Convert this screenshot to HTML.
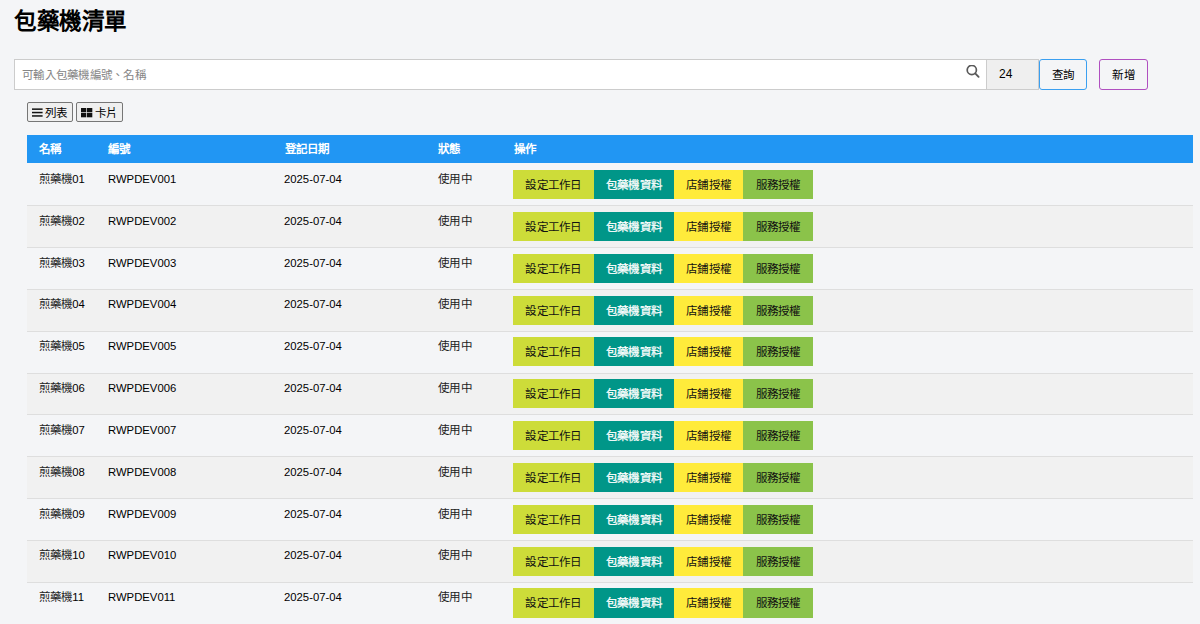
<!DOCTYPE html>
<html lang="zh-TW"><head><meta charset="utf-8"><style>
*{box-sizing:border-box;margin:0;padding:0}
html,body{width:1200px;height:624px;overflow:hidden;background:#f4f5f7;font-family:"Liberation Sans",sans-serif;color:#000}
h1{position:absolute;left:14px;top:7px;letter-spacing:-0.4px;font-size:22.5px;font-weight:bold;line-height:30px;white-space:nowrap}
.search{position:absolute;left:14px;top:59px;width:973px;height:31px;background:#fff;border:1px solid #ccc}
.search .ph{position:absolute;left:7px;top:7px;font-size:11.5px;letter-spacing:0.25px;line-height:16px;color:#858585;white-space:nowrap}
.search svg{position:absolute;left:951px;top:5px}
.k{font-size:11.5px;letter-spacing:0.25px;color:#222}
.num{position:absolute;left:987px;top:59px;width:52px;height:31px;background:#efefef;border:1px solid #ccc;border-left:none;font-size:12px;line-height:16px;padding:6px 0 0 12px}
.btn{position:absolute;top:59px;height:30.5px;border-radius:3px;background:#f4f5f7;font-size:11.5px;text-align:center;line-height:30px;letter-spacing:0.25px}
.q{left:1039px;width:48px;border:1.2px solid #3a9ff0}
.add{left:1099px;width:49px;border:1.2px solid #b04fc0}
.vb{position:absolute;top:102.3px;height:19.3px;border:1px solid #767676;border-radius:2px;background:#efefef;font-size:11.5px;line-height:17px;white-space:nowrap}
.vb svg{position:absolute;left:4px;top:4.5px}
.vb span{position:absolute;top:2px;letter-spacing:0.25px}
.thead{position:absolute;left:27px;top:134.8px;width:1166px;height:28.6px;background:#2196F3;color:#fff;font-weight:bold;font-size:11.5px}
.thead span,.r span.c1,.r span.c2,.r span.c3,.r span.c4{position:absolute;white-space:nowrap;line-height:16px}
.thead span{top:6px;letter-spacing:0.25px}
.rows{position:absolute;left:27px;top:163.4px;width:1166px}
.r{position:relative;height:41.85px;font-size:11.3px}
.r+.r::before{content:"";position:absolute;left:0;top:0;width:100%;height:1px;background:#dedede}
.r.alt{background:#f1f1f1}
.r span.c1,.r span.c2,.r span.c3,.r span.c4{top:7.5px}
.c1{left:11.5px} .c2{left:81px} .c3{left:257px} .c4{left:411px}
.ops{position:absolute;left:486.3px;top:6.6px;display:flex;height:29.1px}
.ops span{display:block;height:29.1px;line-height:30.6px;text-align:center;font-size:11.5px;letter-spacing:0.25px;text-indent:0.25px;color:#111;white-space:nowrap}
.ops .b1{width:80.4px} .ops .b2{width:80.3px} .ops .b3{width:69px} .ops .b4{width:70px}
.b1{background:#CDDC39} .ops .b2{background:#009688;color:#fff;-webkit-text-stroke:0.25px #fff} .b3{background:#FFEB3B} .b4{background:#8BC34A}
</style></head><body>
<h1>包藥機清單</h1>
<div class="search"><span class="ph">可輸入包藥機編號、名稱</span><svg width="16" height="16" viewBox="0 0 16 16"><circle cx="5.8" cy="5.0" r="4.6" fill="none" stroke="#5a5a5a" stroke-width="1.7"/><line x1="9.2" y1="8.4" x2="12.6" y2="11.8" stroke="#5a5a5a" stroke-width="1.9" stroke-linecap="round"/></svg></div>
<div class="num">24</div>
<div class="btn q">查詢</div>
<div class="btn add">新增</div>
<div class="vb" style="left:27.2px;width:45.5px"><svg width="12" height="10" viewBox="0 0 12 10"><rect x="0" y="0.4" width="10.6" height="1.5" fill="#111"/><rect x="0" y="3.8" width="10.6" height="1.5" fill="#111"/><rect x="0" y="7.2" width="10.6" height="1.5" fill="#111"/></svg><span style="left:17px">列表</span></div>
<div class="vb" style="left:76.1px;width:47px"><svg width="12" height="10" viewBox="0 0 12 10"><rect x="0" y="0" width="5.3" height="4.3" fill="#111"/><rect x="6" y="0" width="5.3" height="4.3" fill="#111"/><rect x="0" y="5" width="5.3" height="4.3" fill="#111"/><rect x="6" y="5" width="5.3" height="4.3" fill="#111"/></svg><span style="left:18px">卡片</span></div>
<div class="thead"><span style="left:11.5px">名稱</span><span style="left:81px">編號</span><span style="left:257.5px">登記日期</span><span style="left:411px">狀態</span><span style="left:486.5px">操作</span></div>
<div class="rows">
<div class="r"><span class="c1"><span class="k">煎藥機</span>01</span><span class="c2">RWPDEV001</span><span class="c3">2025-07-04</span><span class="c4 k">使用中</span><div class="ops"><span class="b1">設定工作日</span><span class="b2">包藥機資料</span><span class="b3">店鋪授權</span><span class="b4">服務授權</span></div></div>
<div class="r alt"><span class="c1"><span class="k">煎藥機</span>02</span><span class="c2">RWPDEV002</span><span class="c3">2025-07-04</span><span class="c4 k">使用中</span><div class="ops"><span class="b1">設定工作日</span><span class="b2">包藥機資料</span><span class="b3">店鋪授權</span><span class="b4">服務授權</span></div></div>
<div class="r"><span class="c1"><span class="k">煎藥機</span>03</span><span class="c2">RWPDEV003</span><span class="c3">2025-07-04</span><span class="c4 k">使用中</span><div class="ops"><span class="b1">設定工作日</span><span class="b2">包藥機資料</span><span class="b3">店鋪授權</span><span class="b4">服務授權</span></div></div>
<div class="r alt"><span class="c1"><span class="k">煎藥機</span>04</span><span class="c2">RWPDEV004</span><span class="c3">2025-07-04</span><span class="c4 k">使用中</span><div class="ops"><span class="b1">設定工作日</span><span class="b2">包藥機資料</span><span class="b3">店鋪授權</span><span class="b4">服務授權</span></div></div>
<div class="r"><span class="c1"><span class="k">煎藥機</span>05</span><span class="c2">RWPDEV005</span><span class="c3">2025-07-04</span><span class="c4 k">使用中</span><div class="ops"><span class="b1">設定工作日</span><span class="b2">包藥機資料</span><span class="b3">店鋪授權</span><span class="b4">服務授權</span></div></div>
<div class="r alt"><span class="c1"><span class="k">煎藥機</span>06</span><span class="c2">RWPDEV006</span><span class="c3">2025-07-04</span><span class="c4 k">使用中</span><div class="ops"><span class="b1">設定工作日</span><span class="b2">包藥機資料</span><span class="b3">店鋪授權</span><span class="b4">服務授權</span></div></div>
<div class="r"><span class="c1"><span class="k">煎藥機</span>07</span><span class="c2">RWPDEV007</span><span class="c3">2025-07-04</span><span class="c4 k">使用中</span><div class="ops"><span class="b1">設定工作日</span><span class="b2">包藥機資料</span><span class="b3">店鋪授權</span><span class="b4">服務授權</span></div></div>
<div class="r alt"><span class="c1"><span class="k">煎藥機</span>08</span><span class="c2">RWPDEV008</span><span class="c3">2025-07-04</span><span class="c4 k">使用中</span><div class="ops"><span class="b1">設定工作日</span><span class="b2">包藥機資料</span><span class="b3">店鋪授權</span><span class="b4">服務授權</span></div></div>
<div class="r"><span class="c1"><span class="k">煎藥機</span>09</span><span class="c2">RWPDEV009</span><span class="c3">2025-07-04</span><span class="c4 k">使用中</span><div class="ops"><span class="b1">設定工作日</span><span class="b2">包藥機資料</span><span class="b3">店鋪授權</span><span class="b4">服務授權</span></div></div>
<div class="r alt"><span class="c1"><span class="k">煎藥機</span>10</span><span class="c2">RWPDEV010</span><span class="c3">2025-07-04</span><span class="c4 k">使用中</span><div class="ops"><span class="b1">設定工作日</span><span class="b2">包藥機資料</span><span class="b3">店鋪授權</span><span class="b4">服務授權</span></div></div>
<div class="r"><span class="c1"><span class="k">煎藥機</span>11</span><span class="c2">RWPDEV011</span><span class="c3">2025-07-04</span><span class="c4 k">使用中</span><div class="ops"><span class="b1">設定工作日</span><span class="b2">包藥機資料</span><span class="b3">店鋪授權</span><span class="b4">服務授權</span></div></div>
</div>
</body></html>
